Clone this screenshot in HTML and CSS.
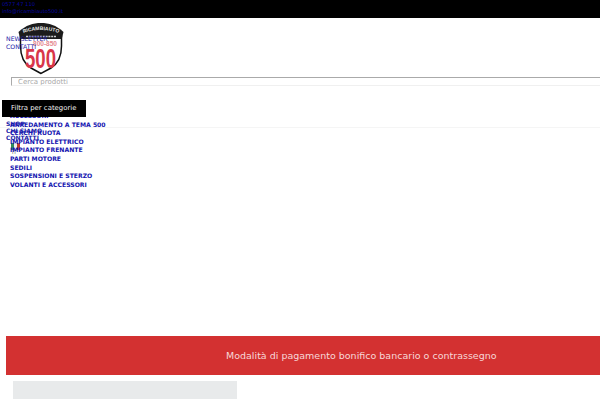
FILE: index.html
```html
<!DOCTYPE html>
<html lang="it">
<head>
<meta charset="utf-8">
<title>Ricambi Auto 500</title>
<link rel="stylesheet" href="styles.css">
</head>
<body>
<div class="topbar">
  <a href="#">0577 47 110</a>
  <a href="#">info@ricambiauto500.it</a>
</div>
<header class="header">
  <nav class="side-links">
    <a href="#">NEWSLETTER</a>
    <a href="#">CONTATTI</a>
  </nav>
  <svg class="logo" viewBox="0 0 46 52" aria-hidden="true">
    <defs><path id="logo-arc" d="M2 13 C10 6.500 36 6.500 44 13"/></defs>
    <path d="M23 51.500 L13 46 C5 41 2.500 33 2.500 24 L2.500 14 L43.500 14 L43.500 24 C43.500 33 41 41 33 46 Z" fill="#fff" stroke="#111" stroke-width="1.500"/>
    <path d="M0.500 10 C8 3 15 1 23 1 C31 1 38 3 45.500 10 L44 16 L43 17 L3 17 L2 16 Z" fill="#1c1c1c"/>
    <text class="logo-name"><textPath href="#logo-arc" startOffset="50%">RICAMBIAUTO</textPath></text>
    <path d="M8 14.500 H38" stroke="#cfcfcf" stroke-width="1.300" stroke-dasharray="2 0.800"/>
    <text class="logo-years" x="15" y="24" textLength="24" lengthAdjust="spacingAndGlyphs">800-850</text>
    <text class="logo-500" x="7" y="46" textLength="31" lengthAdjust="spacingAndGlyphs">500</text>
  </svg>
</header>
<div class="search">
  <input class="search-input" type="text" placeholder="Cerca prodotti">
</div>
<main class="band">
  <div class="filter">Filtra per categorie</div>
  <nav class="main-links">
    <a href="#">SHOP</a>
    <a href="#">CHI SIAMO</a>
    <a href="#">CONTATTI</a>
    <span class="flag"><i class="green"></i><i class="white"></i><i class="red"></i></span>
    <span class="flag-label">IT</span>
  </nav>
  <ul class="cats">
    <li>ACCESSORI</li>
    <li>ARREDAMENTO A TEMA 500</li>
    <li>CERCHI RUOTA</li>
    <li>IMPIANTO ELETTRICO</li>
    <li>IMPIANTO FRENANTE</li>
    <li>PARTI MOTORE</li>
    <li>SEDILI</li>
    <li>SOSPENSIONI E STERZO</li>
    <li>VOLANTI E ACCESSORI</li>
  </ul>
</main>
<section class="notice">Modalità di pagamento bonifico bancario o contrassegno</section>
<div class="placeholder"></div>
</body>
</html>
```
FILE: styles.css
```css
* { box-sizing: border-box; }
html, body { margin: 0; padding: 0; }
body {
  width: 600px;
  height: 400px;
  overflow: hidden;
  position: relative;
  background: #fff;
  font-family: "DejaVu Sans", sans-serif;
  color: #1414b0;
}
a { color: #2222a8; text-decoration: none; }

.topbar {
  height: 18px;
  background: #000;
  padding: 1px 0 0 2px;
  display: flex;
  flex-direction: column;
  font-size: 5.200px;
  line-height: 6.500px;
}
.topbar a { color: #0606a0; }

.header { height: 57px; position: relative; }
.logo { position: absolute; left: 18px; top: 4px; width: 46px; height: 52px; overflow: visible; }
.logo-name { font: bold 5px "Liberation Sans", sans-serif; fill: #eee; text-anchor: middle; }
.logo-years { font: bold 7px "Liberation Sans", sans-serif; fill: #e58a92; }
.logo-500 { font: bold 27px "Liberation Sans", sans-serif; fill: #d8364a; }
.side-links {
  position: absolute;
  left: 6px;
  top: 17px;
  display: flex;
  flex-direction: column;
  font-size: 6.200px;
  line-height: 7.500px;
  z-index: 1;
}

.search { padding: 2px 0 0 11px; height: 25px; }
.search-input {
  display: block;
  width: 589px;
  height: 9px;
  border: 0;
  border-top: 1px solid #aaa;
  border-left: 1px solid #aaa;
  border-bottom: 1px solid #f0f0f0;
  padding: 0 0 0 6px;
  margin: 0;
  outline: 0;
  background: #fff;
  font: 7px "DejaVu Sans", sans-serif;
}
.search-input::placeholder { color: #a8a8a8; }

.band { height: 236px; position: relative; }
.band::before {
  content: "";
  position: absolute;
  left: 0;
  right: 0;
  top: 27px;
  border-top: 1px solid #f5f5f5;
}
.filter {
  position: absolute;
  left: 2px;
  top: 0;
  width: 84px;
  height: 17px;
  background: #000;
  color: #f2f2f2;
  font-size: 6.900px;
  line-height: 17px;
  padding-left: 9px;
  z-index: 2;
}
.main-links {
  position: absolute;
  left: 6px;
  top: 20px;
  display: flex;
  flex-direction: column;
  align-items: flex-start;
  font-size: 6px;
  font-weight: bold;
  line-height: 7px;
}
.main-links a { height: 7px; }
.flag { display: flex; width: 9px; height: 7px; margin: 2px 0 0 5px; }
.flag i { flex: 1; }
.flag .green { background: #2e8b57; }
.flag .white { background: #eee; }
.flag .red { background: #c0392b; }
.flag-label { font-size: 5px; font-weight: normal; line-height: 5px; margin-left: 6px; color: #666; }

.cats {
  position: absolute;
  left: 10px;
  top: 12px;
  margin: 0;
  padding: 0;
  list-style: none;
  font-size: 6.100px;
  line-height: 8.600px;
  font-weight: bold;
}
.cats li { height: 8.600px; white-space: nowrap; }

.notice {
  height: 39px;
  margin-left: 6px;
  background: #d33131;
  color: #f7d8d8;
  font: 9.500px/39px "DejaVu Sans", sans-serif;
  padding-left: 220px;
}
.placeholder {
  width: 224px;
  height: 18px;
  margin: 6px 0 0 13px;
  background: #e8eaeb;
}
```
